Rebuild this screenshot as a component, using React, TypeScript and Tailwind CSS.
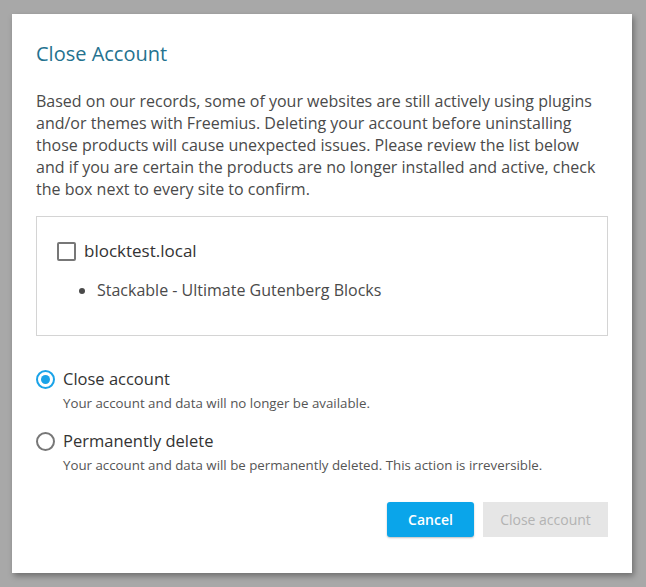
import React, { useState } from 'react';

function Radio({ checked }: { checked: boolean }) {
  return (
    <span
      className={`flex h-[19px] w-[19px] shrink-0 items-center justify-center rounded-full border-2 ${checked ? 'border-[#1aa3e8]' : 'border-[#777]'}`}
    >
      {checked && <span className="h-[9px] w-[9px] rounded-full bg-[#1aa3e8]" />}
    </span>
  );
}

function Option({ label, desc, checked, onClick }: { label: string; desc: string; checked: boolean; onClick: () => void }) {
  return (
    <div className="cursor-pointer" onClick={onClick}>
      <div className="flex h-[22px] items-center gap-[8px]">
        <Radio checked={checked} />
        <span className="text-[16.5px] font-medium text-[#333]">{label}</span>
      </div>
      <div className="mt-[4px] pl-[27px] text-[13.3px] leading-[19px] text-[#555]">{desc}</div>
    </div>
  );
}

export default function App() {
  const [mode, setMode] = useState<'close' | 'delete'>('close');
  const [checked, setChecked] = useState(false);

  return (
    <div
      className="h-[587px] w-[646px] overflow-hidden bg-[#a8a8a8] pl-[12px] pt-[14px]"
      style={{ fontFamily: '"Open Sans", "Liberation Sans", sans-serif' }}
    >
      <div className="flex h-[559px] w-[620px] flex-col bg-white px-[24px] pt-[26px] shadow-[2px_3px_6px_rgba(0,0,0,0.35)]">
        <h1 className="text-[20px] leading-[28px] text-[#24728f]">Close Account</h1>

        <p className="mt-[22px] text-[16px] leading-[22px] text-[#4a4a4a]">
          Based on our records, some of your websites are still actively using plugins and/or themes with Freemius. Deleting your account before uninstalling those products will cause unexpected issues. Please review the list below and if you are certain the products are no longer installed and active, check the box next to every site to confirm.
        </p>

        <div className="mt-[16px] h-[120px] w-[572px] border border-[#d4d4d4] px-[20px] pt-[23px]">
          <label className="flex h-[22px] cursor-pointer items-center gap-[8px]">
            <span
              onClick={() => setChecked(!checked)}
              className="flex h-[19px] w-[19px] items-center justify-center rounded-[2px] border-2 border-[#777]"
            >
              {checked && <span className="text-[12px] leading-none text-[#1aa3e8]">✓</span>}
            </span>
            <span className="text-[17px] font-medium text-[#333]">blocktest.local</span>
          </label>
          <ul className="mt-[17px] list-disc pl-[40px] text-[16px] leading-[22px] text-[#4a4a4a]">
            <li>Stackable - Ultimate Gutenberg Blocks</li>
          </ul>
        </div>

        <div className="mt-[32px] flex flex-col gap-[17px]">
          <Option
            label="Close account"
            desc="Your account and data will no longer be available."
            checked={mode === 'close'}
            onClick={() => setMode('close')}
          />
          <Option
            label="Permanently delete"
            desc="Your account and data will be permanently deleted. This action is irreversible."
            checked={mode === 'delete'}
            onClick={() => setMode('delete')}
          />
        </div>

        <div className="mt-[27px] flex w-[572px] justify-end gap-[9px]">
          <button className="h-[35px] w-[87px] rounded-[3px] bg-[#0aa5ea] text-[14px] font-semibold text-white shadow-[0_1px_2px_rgba(0,0,0,0.25)]">
            Cancel
          </button>
          <button disabled className="h-[35px] w-[125px] bg-[#e6e6e6] text-[14px] text-[#b3b3b3]">
            Close account
          </button>
        </div>
      </div>
    </div>
  );
}
